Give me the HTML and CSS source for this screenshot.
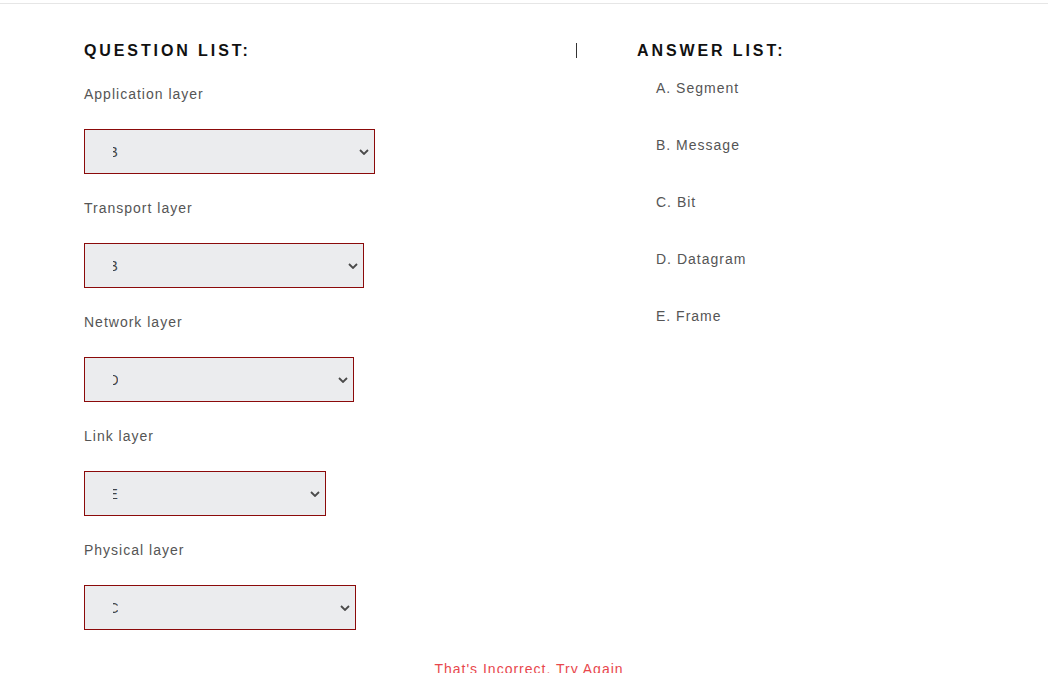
FILE: index.html
```html
<!DOCTYPE html>
<html lang="en">
<head>
<meta charset="utf-8">
<title>Quiz</title>
<link rel="stylesheet" href="styles.css">
</head>
<body>
<div class="topbar"></div>
<main class="quiz">
  <section class="questions">
    <h2 class="title">QUESTION LIST:</h2>
    <div class="q">
      <div class="q-label">Application layer</div>
      <div class="select w-app"><span class="val"><span class="glyph">B</span></span><svg class="chev" width="10" height="6" viewBox="0 0 10 6"><polyline points="1,1 5,5 9,1" fill="none" stroke="#4a4a4a" stroke-width="1.8"/></svg></div>
    </div>
    <div class="q">
      <div class="q-label">Transport layer</div>
      <div class="select w-tra"><span class="val"><span class="glyph">B</span></span><svg class="chev" width="10" height="6" viewBox="0 0 10 6"><polyline points="1,1 5,5 9,1" fill="none" stroke="#4a4a4a" stroke-width="1.8"/></svg></div>
    </div>
    <div class="q">
      <div class="q-label">Network layer</div>
      <div class="select w-net"><span class="val"><span class="glyph">D</span></span><svg class="chev" width="10" height="6" viewBox="0 0 10 6"><polyline points="1,1 5,5 9,1" fill="none" stroke="#4a4a4a" stroke-width="1.8"/></svg></div>
    </div>
    <div class="q">
      <div class="q-label">Link layer</div>
      <div class="select w-lin"><span class="val"><span class="glyph">E</span></span><svg class="chev" width="10" height="6" viewBox="0 0 10 6"><polyline points="1,1 5,5 9,1" fill="none" stroke="#4a4a4a" stroke-width="1.8"/></svg></div>
    </div>
    <div class="q">
      <div class="q-label">Physical layer</div>
      <div class="select w-phy"><span class="val"><span class="glyph">C</span></span><svg class="chev" width="10" height="6" viewBox="0 0 10 6"><polyline points="1,1 5,5 9,1" fill="none" stroke="#4a4a4a" stroke-width="1.8"/></svg></div>
    </div>
  </section>
  <div class="divider"></div>
  <section class="answers">
    <h2 class="title">ANSWER LIST:</h2>
    <ul class="answer-list">
      <li>A. Segment</li>
      <li>B. Message</li>
      <li>C. Bit</li>
      <li>D. Datagram</li>
      <li>E. Frame</li>
    </ul>
  </section>
</main>
<p class="feedback">That's Incorrect. Try Again</p>
</body>
</html>
```

FILE: styles.css
```css
html, body {
  margin: 0;
  padding: 0;
  background: #ffffff;
  font-family: "Liberation Sans", Arial, sans-serif;
}

.topbar {
  height: 3px;
  border-bottom: 1px solid #e6e6e6;
}

.quiz {
  display: flex;
  align-items: flex-start;
  padding: 38px 0 0 84px;
}

.questions {
  width: 492px;
}

.title {
  margin: 0;
  font-size: 16px;
  line-height: 18px;
  font-weight: bold;
  letter-spacing: 2.9px;
  color: #111111;
}

.q {
  padding-top: 24px;
}

.q-label {
  font-size: 14px;
  line-height: 20px;
  letter-spacing: 1px;
  color: #555555;
  margin-bottom: 25px;
}

.select {
  box-sizing: border-box;
  height: 45px;
  border: 1px solid #8b0a0a;
  background: #ebecee;
  display: flex;
  align-items: center;
  justify-content: space-between;
  padding: 0 5px 0 28px;
}

.w-app { width: 291px; }
.w-tra { width: 280px; }
.w-net { width: 270px; }
.w-lin { width: 242px; }
.w-phy { width: 272px; }

.val {
  display: inline-block;
  width: 5px;
  overflow: hidden;
  font-size: 14px;
  line-height: 16px;
  color: #444444;
  white-space: nowrap;
}

.glyph {
  display: inline-block;
  margin-left: -4.5px;
}

.chev {
  display: block;
}

.divider {
  width: 1px;
  height: 15px;
  margin-top: 1px;
  background: #333333;
}

.answers {
  padding-left: 60px;
}

.answer-list {
  list-style: none;
  margin: 18px 0 0 0;
  padding: 0 0 0 19px;
}

.answer-list li {
  font-size: 14px;
  line-height: 20px;
  letter-spacing: 1px;
  color: #555555;
  margin-bottom: 37px;
}

.feedback {
  margin: 29px 0 0 0;
  padding-left: 10px;
  text-align: center;
  font-size: 14px;
  line-height: 20px;
  letter-spacing: 1px;
  color: #e8474d;
}
```
